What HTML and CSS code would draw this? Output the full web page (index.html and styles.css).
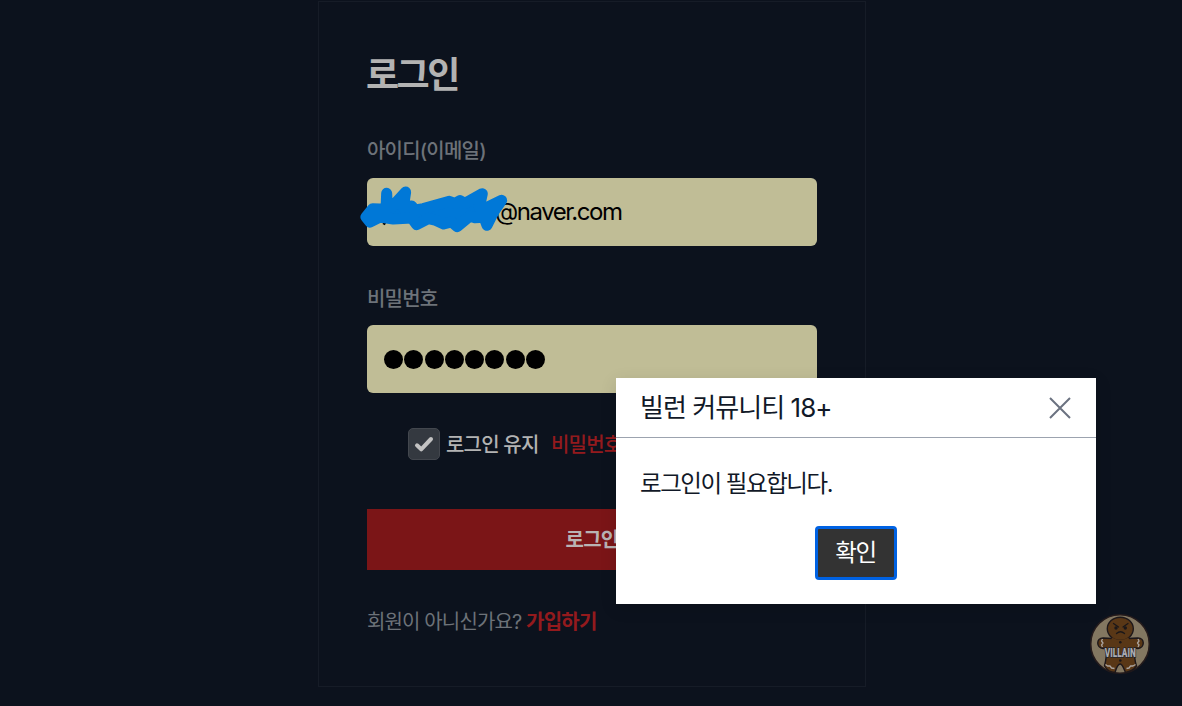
FILE: index.html
```html
<!DOCTYPE html>
<html lang="ko">
<head>
  <meta charset="UTF-8" />
  <meta name="viewport" content="width=device-width, initial-scale=1.0"/>
  <title>로그인</title>
  <link rel="stylesheet" href="styles.css">
</head>
<body>
  <div class="card">
    <h1 class="title">로그인</h1>

    <div class="label">아이디(이메일)</div>
    <div class="field email">
      <span class="address">@naver.com</span>
      <svg class="scribble" width="290" height="85" viewBox="0 0 870 255">
        <path class="tail" d="M106 154 L101 164"/>
        <path class="ink" d="M48 141 L68 116 L108 118 L110 70 L112 112 L125 112 L167 66 L160 112 L185 108 L195 120 L220 116 L298 94 L315 100 L330 92 L345 100 L397 71 L388 112 L415 110 L455 91 L432 124 L411 166 L402 142 L375 143 L360 138 L322 170 L305 156 L281 162 L255 150 L235 146 L200 164 L185 144 L130 147 L90 141 L60 156 Z"/>
      </svg>
    </div>

    <div class="label second">비밀번호</div>
    <div class="field password">
      <i></i><i></i><i></i><i></i><i></i><i></i><i></i><i></i>
    </div>

    <div class="options">
      <span class="checkbox">
        <svg width="32" height="32" viewBox="0 0 32 32"><path d="M9 17.3 L13.2 21.3 L23 11"/></svg>
      </span>
      <span class="keep">로그인 유지</span>
      <a class="forgot">비밀번호 찾기</a>
    </div>

    <button class="login">로그인</button>

    <div class="join">회원이 아니신가요? <a>가입하기</a></div>
  </div>

  <!-- villain badge -->
  <svg class="badge" width="64" height="64" viewBox="0 0 64 64">
    <circle cx="32" cy="32" r="29.3" fill="#837761" stroke="#251b1c" stroke-width="1.6"/>
    <g fill="#593716" stroke="#1d171a" stroke-width="1.4" stroke-linejoin="round">
      <path d="M24 26.5 L15 26 C8 26 8 36 15 36.5 L18.5 36 C19 44 18 48 16.5 54 Q20 60 27 60.5 C28 57 30 52 32.3 52 C34.5 52 36 57 37.5 60.5 Q45 59 48.5 54 C46.5 48 46 44 46.5 36 L50 36.5 C57 36 57 26 50 26 L40 26.5 Z"/>
      <ellipse cx="32.3" cy="16.8" rx="13" ry="11.6"/>
    </g>
    <path d="M24 25.5 Q32 30 40.5 25.5 L41.5 29 L23 29 Z" fill="#593716"/>
    <g fill="none" stroke="#1b1719" stroke-width="1.3" stroke-linecap="round">
      <path d="M25.5 11.5 L30.5 15 M40 11.5 L35 15 M28.5 21.5 Q32.5 18 36.5 21.5"/>
    </g>
    <g fill="#1b1719">
      <circle cx="28" cy="16" r="1.7"/>
      <circle cx="37.3" cy="16" r="1.7"/>
      <circle cx="32.3" cy="30.3" r="1.3"/>
      <circle cx="32.3" cy="48.5" r="1.3"/>
    </g>
    <g fill="none" stroke="#aaa4a0" stroke-width="1.3" stroke-linejoin="round">
      <path d="M14.5 27 L13.5 29 L15 31 L13.5 33 L14.5 35 M50 27 L51 29 L49.5 31 L51 33 L50 35"/>
      <path d="M17.5 52.5 L19.5 54 L22 54 L23.5 56 L26.5 56.5 M38.5 56.5 L41 56 L42.5 54 L45 54 L47.5 52.5"/>
    </g>
    <text x="32.3" y="44.8" text-anchor="middle" textLength="31" lengthAdjust="spacingAndGlyphs">VILLAIN</text>
  </svg>

  <div class="modal">
    <div class="modal-head">
      <span class="modal-title">빌런 커뮤니티 18+</span>
      <svg class="close" width="22" height="22" viewBox="0 0 22 22"><path d="M1 1 L21 21 M21 1 L1 21"/></svg>
    </div>
    <div class="modal-body">
      <p class="message">로그인이 필요합니다.</p>
      <button class="confirm">확인</button>
    </div>
  </div>
</body>
</html>
```
FILE: styles.css
```css
* {
  box-sizing: border-box;
}

body {
  margin: 0;
  padding-top: 1px;
  height: 706px;
  overflow: hidden;
  background-color: #0c121d;
  font-family: Inter, "Noto Sans CJK KR", sans-serif;
  font-size: 20px;
  letter-spacing: -0.8px;
}

.card {
  width: 548px;
  height: 686px;
  margin: 0 auto 0 318px;
  padding: 48px;
  border: 1px solid #161c27;
}

.title {
  margin: 0 0 0 -1px;
  height: 46px;
  line-height: 50px;
  font-size: 36px;
  font-weight: 700;
  letter-spacing: -2.5px;
  color: #b3b3b3;
}

.label {
  margin-top: 39px;
  height: 30px;
  line-height: 32px;
  font-weight: 500;
  color: #6d7279;
}

.label.second {
  margin-top: 37px;
}

.field {
  position: relative;
  display: flex;
  align-items: center;
  height: 68px;
  margin-top: 12px;
  border-radius: 6px;
  background-color: #c0bd96;
  color: #000;
}

.email {
  margin-top: 13px;
  padding: 0 0 2px 128px;
  font-size: 24px;
  letter-spacing: -1.45px;
}

.scribble {
  position: absolute;
  left: -17px;
  top: -8px;
}

.ink {
  fill: #0078d7;
  stroke: #0078d7;
  stroke-width: 33;
  stroke-linecap: round;
  stroke-linejoin: round;
}

.tail {
  stroke: #000;
  stroke-width: 8;
}

.password {
  padding-left: 17px;
  gap: 1.3px;
}

.password i {
  width: 19px;
  height: 19px;
  border-radius: 50%;
  background-color: #000;
}

.options {
  display: flex;
  align-items: center;
  height: 32px;
  margin: 35px 0 49px 41px;
  white-space: nowrap;
  font-weight: 500;
}

.checkbox {
  width: 32px;
  height: 32px;
  border: 1px solid #43474e;
  border-radius: 5px;
  background-color: #343940;
}

.checkbox svg {
  display: block;
  margin: -1px;
  fill: none;
  stroke: #c2c2c2;
  stroke-width: 4;
  stroke-linecap: round;
  stroke-linejoin: round;
}

.keep,
.forgot {
  padding-bottom: 1px;
}

.keep {
  margin-left: 6px;
  width: 105px;
  color: #b3b3b3;
}

.forgot {
  color: #941a1d;
}

.login {
  display: block;
  width: 450px;
  height: 61px;
  padding: 0 0 2px;
  border: none;
  background-color: #7b1517;
  color: #b9b3b3;
  font: inherit;
  font-weight: 600;
  letter-spacing: inherit;
}

.join {
  margin-top: 37px;
  line-height: 30px;
  letter-spacing: -0.87px;
  color: #6d7279;
}

.join a {
  font-weight: 700;
  letter-spacing: -0.8px;
  color: #941a1d;
}

.badge {
  position: absolute;
  left: 1088px;
  top: 612px;
}

.badge text {
  font-family: Roboto, sans-serif;
  font-size: 12px;
  font-weight: 900;
  letter-spacing: 0;
  fill: #aaabb0;
  stroke: #24252b;
  stroke-width: 1.6px;
  paint-order: stroke;
}

.modal {
  position: absolute;
  left: 616px;
  top: 378px;
  width: 480px;
  height: 226px;
  background-color: #fff;
  color: #111827;
  box-shadow: 0 4px 16px rgba(0, 0, 0, 0.12);
}

.modal-head {
  display: flex;
  align-items: center;
  justify-content: space-between;
  height: 60px;
  padding: 0 25px 0 24px;
  border-bottom: 1px solid #9ca3af;
}

.modal-title {
  padding-bottom: 4px;
  font-size: 26px;
  letter-spacing: -0.95px;
}

.close {
  fill: none;
  stroke: #6b7280;
  stroke-width: 2;
}

.modal-body {
  display: flex;
  flex-direction: column;
  align-items: center;
  padding: 28px 24px 0;
}

.message {
  width: 100%;
  height: 34px;
  line-height: 36px;
  margin: 0 0 26px;
  font-size: 23.5px;
  letter-spacing: -1.45px;
}

.confirm {
  width: 82px;
  height: 54px;
  padding: 0 1px 4px 0;
  border: 3px solid #0062e3;
  border-radius: 4px;
  background-color: #333;
  color: #fff;
  font: inherit;
  font-size: 23.5px;
  letter-spacing: -1.4px;
}
```
